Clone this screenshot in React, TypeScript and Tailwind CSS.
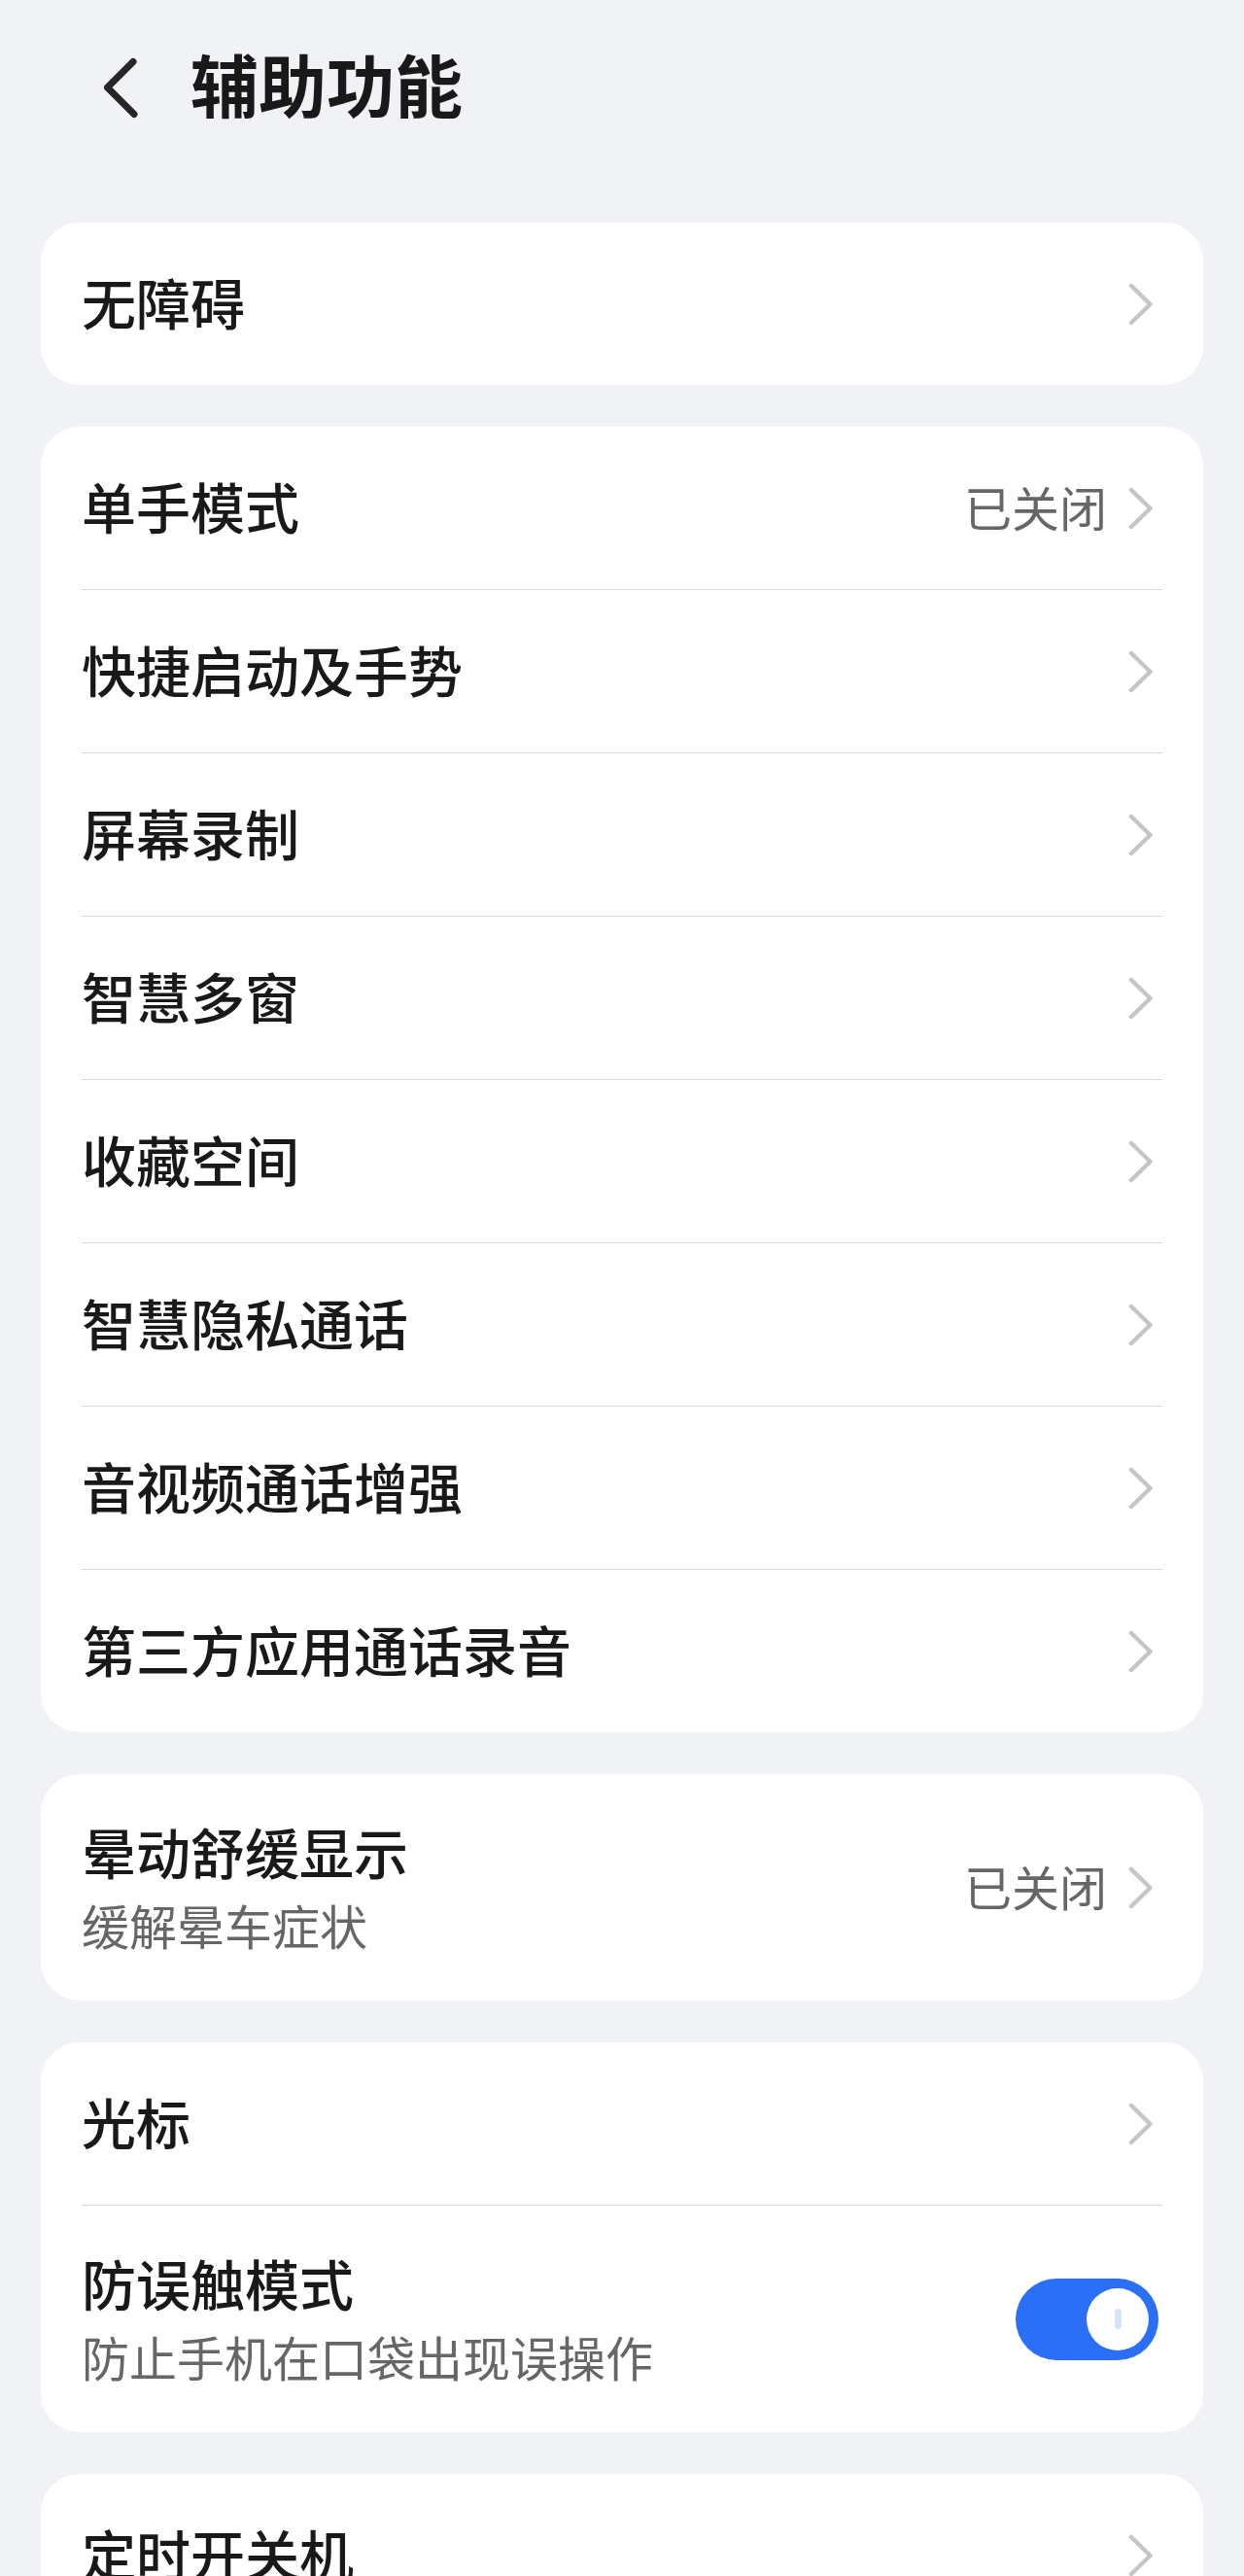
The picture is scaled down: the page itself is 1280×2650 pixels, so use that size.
import React from "react";

const Chevron = () => (
  <svg width="26" height="44" viewBox="0 0 26 44" className="mr-[9px] shrink-0" fill="none">
    <path d="M3 3 L22.5 22 L3 41" stroke="#c6c6c6" strokeWidth="4.5" strokeLinecap="round" strokeLinejoin="round" />
  </svg>
);

const Row = ({ title, status }: { title: string; status?: string }) => (
  <div className="h-[167px] flex items-center justify-between">
    <span className="text-[56px] leading-none font-medium text-[#191919] pb-[6px]">{title}</span>
    <div className="flex items-center gap-[22px]">
      {status && <span className="text-[49px] leading-none text-[#666666] pb-[4px]">{status}</span>}
      <Chevron />
    </div>
  </div>
);

const Divider = () => <div className="h-px bg-[#d6d6d6]" />;

const Card = ({ children }: { children: React.ReactNode }) => (
  <div className="bg-white rounded-[40px] px-[42px]">{children}</div>
);

export default function App() {
  const group2 = [
    { title: "单手模式", status: "已关闭" },
    { title: "快捷启动及手势" },
    { title: "屏幕录制" },
    { title: "智慧多窗" },
    { title: "收藏空间" },
    { title: "智慧隐私通话" },
    { title: "音视频通话增强" },
    { title: "第三方应用通话录音" },
  ];
  return (
    <div
      className="min-h-[2650px] bg-[#f1f2f6] overflow-hidden"
      style={{ fontFamily: '"Noto Sans CJK SC", "Noto Sans", sans-serif' }}
    >
      <div className="h-[229px] flex items-start pl-[104px]">
        <svg width="40" height="66" viewBox="0 0 40 66" fill="none" className="mt-[57px] shrink-0">
          <path d="M33 6.5 L6.5 33 L34 60.5" stroke="#262626" strokeWidth="7" strokeLinecap="round" strokeLinejoin="round" />
        </svg>
        <h1 className="ml-[52px] mt-[51px] text-[70px] leading-none font-bold text-[#191919]">辅助功能</h1>
      </div>
      <div className="px-[42px] flex flex-col gap-[43px] pb-[40px]">
        <Card>
          <Row title="无障碍" />
        </Card>
        <Card>
          {group2.map((r, i) => (
            <React.Fragment key={r.title}>
              {i > 0 && <Divider />}
              <Row title={r.title} status={r.status} />
            </React.Fragment>
          ))}
        </Card>
        <Card>
          <div className="h-[233px] flex items-center justify-between">
            <div className="flex flex-col gap-[8px] pb-[3px]">
              <span className="text-[56px] leading-[72px] font-medium text-[#191919]">晕动舒缓显示</span>
              <span className="text-[49px] leading-[64px] text-[#666666]">缓解晕车症状</span>
            </div>
            <div className="flex items-center gap-[22px]">
              <span className="text-[49px] leading-none text-[#666666] pb-[4px]">已关闭</span>
              <Chevron />
            </div>
          </div>
        </Card>
        <Card>
          <Row title="光标" />
          <Divider />
          <div className="h-[233px] flex items-center justify-between">
            <div className="flex flex-col gap-[8px] pb-[3px]">
              <span className="text-[56px] leading-[72px] font-medium text-[#191919]">防误触模式</span>
              <span className="text-[49px] leading-[64px] text-[#666666]">防止手机在口袋出现误操作</span>
            </div>
            <div className="relative w-[147px] h-[84px] rounded-full bg-[#2b6ff6] mr-[4px] shrink-0">
              <div className="absolute right-[10px] top-[10px] w-[64px] h-[64px] rounded-full bg-white flex items-center justify-center">
                <div className="w-[7px] h-[21px] rounded-full bg-[#d5e2fb]" />
              </div>
            </div>
          </div>
        </Card>
        <Card>
          <Row title="定时开关机" />
        </Card>
      </div>
    </div>
  );
}
